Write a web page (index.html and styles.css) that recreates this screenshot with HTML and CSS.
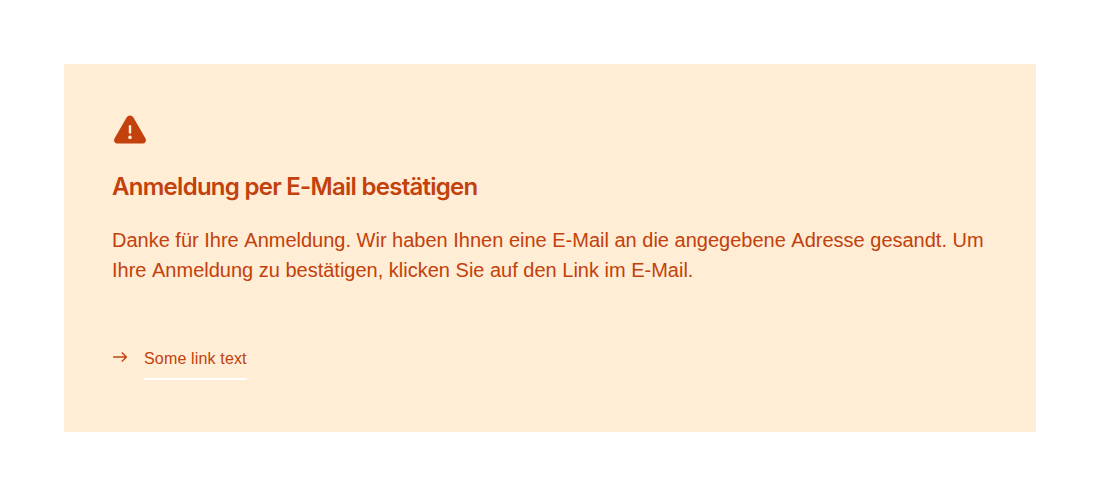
FILE: index.html
```html
<!DOCTYPE html>
<html lang="de">
<head>
<meta charset="utf-8">
<title>Anmeldung per E-Mail bestätigen</title>
<link rel="stylesheet" href="styles.css">
</head>
<body>
<section class="notice">
  <svg class="notice-icon" viewBox="0 0 36 36" aria-hidden="true">
    <path class="icon-shape" d="M14.6 5.4a3.9 3.9 0 0 1 6.8 0l12.1 21.100a3.400 3.400 0 0 1-3 5.100H5.500a3.400 3.400 0 0 1-3-5.100z"/>
    <path class="icon-mark" d="M18 14.300v6.200"/>
    <circle class="icon-dot" cx="18" cy="25.400" r="1.800"/>
  </svg>
  <h2 class="notice-title">Anmeldung per E-Mail bestätigen</h2>
  <p class="notice-text">Danke für Ihre Anmeldung. Wir haben Ihnen eine E-Mail an die angegebene Adresse gesandt. Um Ihre Anmeldung zu bestätigen, klicken Sie auf den Link im E-Mail.</p>
  <a class="notice-link" href="#">
    <svg class="link-arrow" viewBox="0 0 16 16" aria-hidden="true"><path d="M1.200 8h13M9.800 3.500l4.600 4.500-4.600 4.500"/></svg>
    <span class="link-label">Some link text</span>
  </a>
</section>
</body>
</html>
```
FILE: styles.css
```css
body {
  margin: 64px;
  font-family: "Liberation Sans", Arial, sans-serif;
  font-kerning: none;
}
.notice {
  padding: 48px;
  background: #ffedd5;
  color: #c2410c;
}
.notice-icon {
  display: block;
  width: 36px;
  height: 36px;
}
.icon-shape { fill: #c2410c; }
.icon-mark {
  stroke: #ffedd5;
  stroke-width: 2.4;
  stroke-linecap: round;
}
.icon-dot { fill: #ffedd5; }
.notice-title {
  margin: 24px 0;
  font-family: Inter, sans-serif;
  font-size: 24px;
  font-weight: 600;
  font-feature-settings: "calt" 0;
  line-height: 29px;
  letter-spacing: -0.03em;
}
.notice-text {
  margin: 0;
  font-size: 20px;
  line-height: 30px;
}
.notice-link {
  display: flex;
  width: fit-content;
  gap: 16px;
  margin-top: 63px;
  padding-bottom: 4px;
  color: inherit;
  font-size: 16px;
  line-height: 22px;
  letter-spacing: 0.01em;
  text-decoration: none;
}
.link-arrow {
  width: 16px;
  height: 16px;
  margin-top: 1px;
  fill: none;
  stroke: currentColor;
  stroke-width: 1.4;
  stroke-linejoin: round;
}
.link-label {
  padding-bottom: 8px;
  border-bottom: 2px solid #fff;
}
```
